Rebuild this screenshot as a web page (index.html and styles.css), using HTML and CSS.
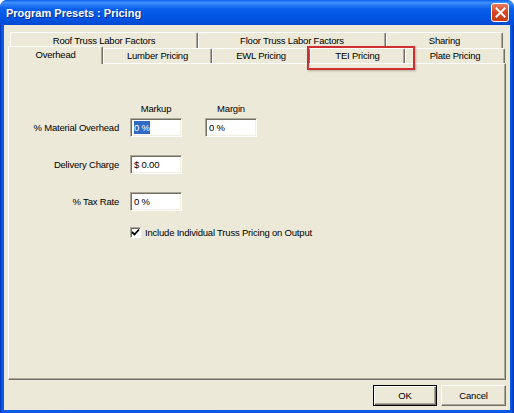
FILE: index.html
```
<!DOCTYPE html>
<html lang="en">

<head>
    <meta charset="UTF-8">
    <title>Program Presets : Pricing</title>
    <link rel="stylesheet" href="styles.css">
</head>

<body>
    <div class="window">
        <div class="titlebar">
            <span class="title">Program Presets : Pricing</span>
            <span class="close">
                <svg width="11" height="11" viewBox="0 0 11 11">
                    <path d="M1.5 1.5 L9.5 9.5 M9.5 1.5 L1.5 9.5" stroke="#fff" stroke-width="2" stroke-linecap="square" />
                </svg>
            </span>
        </div>

        <div class="client">
            <div class="tabs">
                <div class="tabrow back">
                    <div class="tab t-roof">Roof Truss Labor Factors</div>
                    <div class="tab t-floor">Floor Truss Labor Factors</div>
                    <div class="tab t-sharing">Sharing</div>
                </div>
                <div class="tabrow front">
                    <div class="tab active t-overhead">Overhead</div>
                    <div class="tab t-lumber">Lumber Pricing</div>
                    <div class="tab t-ewl">EWL Pricing</div>
                    <div class="tab t-tei">TEI Pricing<span class="mark"></span></div>
                    <div class="tab t-plate">Plate Pricing</div>
                </div>
            </div>

            <div class="panel">
                <div class="row head">
                    <span class="lbl"></span>
                    <span class="colhead">Markup</span>
                    <span class="colhead">Margin</span>
                </div>
                <div class="row">
                    <span class="lbl">% Material Overhead</span>
                    <span class="field"><span class="sel">0 %</span></span>
                    <span class="field">0 %</span>
                </div>
                <div class="row">
                    <span class="lbl">Delivery Charge</span>
                    <span class="field">$ 0.00</span>
                </div>
                <div class="row">
                    <span class="lbl">% Tax Rate</span>
                    <span class="field">0 %</span>
                </div>
                <div class="check">
                    <span class="box">
                        <svg width="9" height="9" viewBox="0 0 9 9">
                            <path d="M1 4 L3.5 6.5 L8 1.5" fill="none" stroke="#000" stroke-width="1.8" />
                        </svg>
                    </span>
                    <span>Include Individual Truss Pricing on Output</span>
                </div>
            </div>

            <div class="buttons">
                <button class="button default">OK</button>
                <button class="button">Cancel</button>
            </div>
        </div>
    </div>
</body>

</html>
```

FILE: styles.css
```
body {
    margin: 0;
    background-color: white;
    font-family: "Liberation Sans", Arial, sans-serif;
    font-size: 9.5px;
    letter-spacing: -0.2px;
    color: black;
}

.window {
    width: 514px;
    height: 413px;
    display: flex;
    flex-direction: column;
    background: linear-gradient(to right, #0030b8 0px, #0a5ae8 2px, #0758e6 calc(100% - 3px), #0033b5 100%);
    border-radius: 7px 7px 0 0;
    overflow: hidden;
}

.titlebar {
    height: 25px;
    flex: none;
    display: flex;
    align-items: center;
    justify-content: space-between;
    padding: 0 5px 0 6px;
    background: linear-gradient(to bottom, #0a5fe8 0%, #3d8ffc 10%, #0a5fec 35%, #0054e3 75%, #0049d0 100%);
}

.title {
    color: white;
    font-weight: bold;
    font-size: 11px;
    letter-spacing: 0;
    text-shadow: 1px 1px #0b2e8e;
}

.close {
    width: 18px;
    height: 19px;
    box-sizing: border-box;
    border: 1px solid white;
    border-radius: 3px;
    background: linear-gradient(to bottom, #e87a5d, #d9441f 50%, #c93a17);
    display: flex;
    align-items: center;
    justify-content: center;
}

.client {
    flex: 1;
    margin: 0 4px 3px 4px;
    background-color: #ece9d8;
    display: flex;
    flex-direction: column;
}

/* tabs */

.tabs {
    padding-top: 7px;
}

.tabrow {
    display: flex;
}

.back {
    height: 16px;
    padding-left: 6px;
}

.front {
    height: 15px;
    padding-left: 4px;
}

.tab {
    box-sizing: border-box;
    text-align: center;
    border-top: 1px solid white;
    border-left: 1px solid white;
    border-right: 1px solid #716f64;
    box-shadow: inset -1px 0 #aca899;
    border-radius: 2px 2px 0 0;
    background-color: #ece9d8;
}

.back .tab {
    height: 16px;
    line-height: 15px;
}

.front .tab {
    height: 15px;
    line-height: 14px;
}

.front .tab.active {
    height: 18px;
    line-height: 15px;
    margin-top: -2px;
    position: relative;
    z-index: 1;
}

.t-roof { width: 188px; }
.t-floor { width: 188px; }
.t-sharing { width: 117px; }
.t-overhead { width: 95px; }
.t-lumber { width: 109px; }
.t-ewl { width: 98px; }
.t-tei { width: 95px; position: relative; }
.t-plate { width: 100px; }

.mark {
    position: absolute;
    left: -4px;
    top: -3px;
    width: 108px;
    height: 24px;
    box-sizing: border-box;
    border: 2px solid #cf2f2f;
    box-shadow: 1px 1px 2px rgba(0, 0, 0, 0.25);
    z-index: 2;
}

/* panel */

.panel {
    margin-left: 4px;
    width: 498px;
    height: 317px;
    box-sizing: border-box;
    border-top: 1px solid white;
    border-left: 1px solid white;
    border-right: 1px solid #716f64;
    border-bottom: 1px solid #716f64;
    box-shadow: inset -1px -1px #aca899;
    padding-top: 38px;
}

.row {
    display: flex;
    align-items: center;
    height: 19px;
    margin-bottom: 18px;
}

.row.head {
    height: 13px;
    margin-bottom: 3px;
}

.lbl {
    width: 110px;
    margin-right: 11px;
    text-align: right;
}

.colhead {
    width: 52px;
    text-align: center;
}

.colhead + .colhead {
    margin-left: 23px;
}

.field {
    width: 52px;
    height: 19px;
    box-sizing: border-box;
    background-color: white;
    border: 1px solid;
    border-color: #aca899 white white #aca899;
    box-shadow: inset 1px 1px #716f64, inset -1px -1px #f1efe2;
    padding-left: 3px;
    line-height: 17px;
}

.field + .field {
    margin-left: 23px;
}

.sel {
    background-color: #316ac5;
    color: white;
    padding: 1px 0;
}

.check {
    display: flex;
    align-items: center;
    padding-left: 121px;
    margin-top: -3px;
    height: 13px;
}

.box {
    width: 11px;
    height: 11px;
    box-sizing: border-box;
    background-color: white;
    border: 1px solid;
    border-color: #aca899 white white #aca899;
    box-shadow: inset 1px 1px #716f64;
    margin-right: 4px;
    display: flex;
    align-items: center;
    justify-content: center;
}

/* buttons */

.buttons {
    display: flex;
    justify-content: flex-end;
    gap: 4px;
    margin-top: 5px;
    padding-right: 4px;
}

.button {
    width: 65px;
    height: 21px;
    box-sizing: border-box;
    font-family: "Liberation Sans", Arial, sans-serif;
    font-size: 9.5px;
    letter-spacing: -0.2px;
    color: black;
    background-color: #ece9d8;
    border: 1px solid;
    border-color: white #716f64 #716f64 white;
    box-shadow: inset -1px -1px #aca899;
    padding: 0;
}

.button.default {
    width: 64px;
    border-color: black;
    box-shadow: inset 1px 1px white, inset -1px -1px #716f64, inset -2px -2px #aca899;
}
```
